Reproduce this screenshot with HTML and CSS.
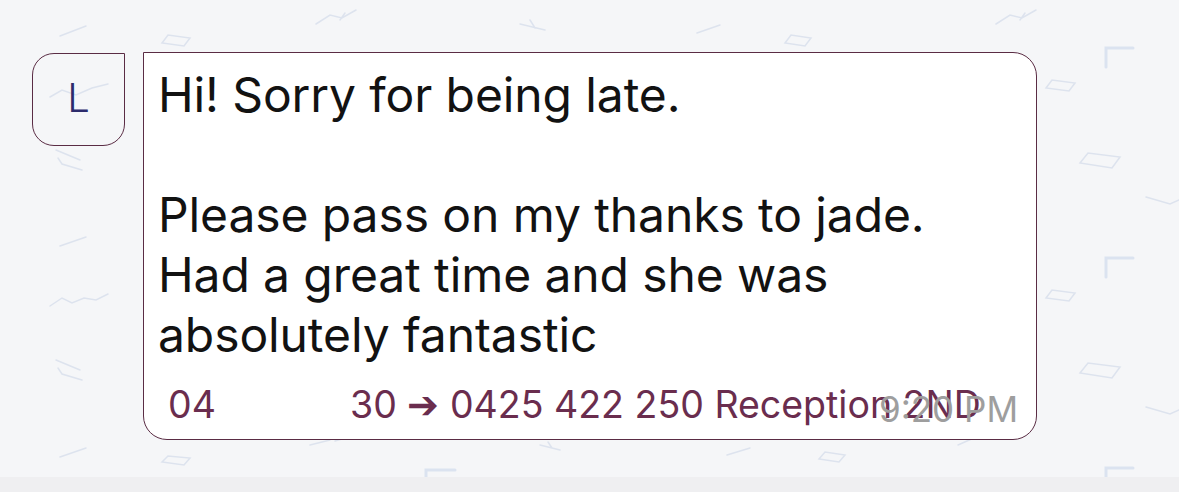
FILE: index.html
```html
<!DOCTYPE html>
<html>
<head>
<meta charset="utf-8">
<link rel="stylesheet" href="styles.css">
</head>
<body>
<div class="screen">
  <svg class="doodles" width="1179" height="477" viewBox="0 0 1179 477" fill="none" stroke="#dde3ee" stroke-width="1.5" stroke-linecap="round">
    <path d="M60 36 L86 26"/>
    <path d="M162 43 L168 35 L190 38 L184 46 Z"/>
    <path d="M316 24 L330 15 L342 18 L356 10 M340 20 L345 13"/>
    <path d="M520 24 L545 30 M530 20 L535 28"/>
    <path d="M697 33 L720 25"/>
    <path d="M785 43 L791 35 L811 38 L805 46 Z"/>
    <path d="M996 24 L1010 15 L1022 18 L1036 10 M1020 20 L1025 13"/>
    <path d="M1106 67 L1106 48 L1133 48" stroke="#dbe3f0" stroke-width="3"/>
    <path d="M1046 88 L1052 80 L1075 83 L1069 91 Z"/>
    <path d="M1080 163 L1088 153 L1120 157 L1112 168 Z"/>
    <path d="M1146 197 L1170 204 L1179 200"/>
    <path d="M1106 277 L1106 258 L1133 258" stroke="#dbe3f0" stroke-width="3"/>
    <path d="M1046 298 L1052 290 L1075 293 L1069 301 Z"/>
    <path d="M1080 373 L1088 363 L1120 367 L1112 378 Z"/>
    <path d="M1146 407 L1170 414 L1179 410"/>
    <path d="M1106 477 L1106 468 L1133 468" stroke="#dbe3f0" stroke-width="3"/>
    <path d="M50 97 L62 90 L76 95 L92 88 L108 84"/>
    <path d="M56 150 L80 160 M58 158 L62 164 L82 170"/>
    <path d="M60 246 L86 237"/>
    <path d="M50 306 L62 298 L72 303 L84 298 L96 300 L108 294"/>
    <path d="M56 360 L80 370 M58 368 L62 374 L82 380"/>
    <path d="M60 457 L86 448"/>
    <path d="M162 462 L168 456 L190 458 L184 465 Z"/>
    <path d="M310 445 L330 440 M335 441 L345 438"/>
    <path d="M426 477 L426 470 L455 470" stroke="#dbe3f0" stroke-width="3"/>
    <path d="M540 445 L560 450 M548 442 L552 448"/>
    <path d="M727 455 L750 448"/>
    <path d="M819 459 L825 452 L845 455 L839 462 Z"/>
    <path d="M958 445 L985 433"/>
  </svg>
  <div class="row">
    <div class="avatar">L</div>
    <div class="bubble">
      <p class="body">Hi! Sorry for being late.<br><br>Please pass on my thanks to jade.<br>Had a great time and she was<br>absolutely fantastic</p>
      <p class="footer"><span class="area">04</span><span>30 ➔ 0425 422 250 Reception 2ND</span></p>
      <span class="time">9:20 PM</span>
    </div>
  </div>
</div>
<div class="bottombar"></div>
</body>
</html>
```

FILE: styles.css
```css
html, body {
  margin: 0;
  padding: 0;
}
body {
  width: 1179px;
  height: 492px;
  overflow: hidden;
  background: #f5f6f8;
  font-family: Inter, "Liberation Sans", sans-serif;
}
.screen {
  position: relative;
  height: 477px;
}
.doodles {
  position: absolute;
  left: 0;
  top: 0;
}
.row {
  position: relative;
  display: flex;
  align-items: flex-start;
  gap: 18px;
  padding: 52px 0 0 32px;
}
.avatar {
  box-sizing: border-box;
  width: 93px;
  height: 93px;
  margin-top: 1px;
  padding-bottom: 4px;
  border: 1.5px solid #5a2c44;
  border-radius: 22px 0 22px 22px;
  display: flex;
  align-items: center;
  justify-content: center;
  color: #2c2b6c;
  font-size: 40px;
  font-weight: 350;
}
.bubble {
  position: relative;
  box-sizing: border-box;
  width: 894px;
  height: 388px;
  background: #fff;
  border: 1.5px solid #5a2c44;
  border-radius: 0 24px 24px 24px;
  padding: 12px 14px 0 14px;
}
.body {
  margin: 0;
  color: #121212;
  font-size: 48px;
  line-height: 60px;
  letter-spacing: -0.1px;
}
.footer {
  margin: 18px 0 0 10px;
  color: #6a2d4e;
  font-size: 37.5px;
  line-height: 44px;
  display: flex;
  white-space: nowrap;
}
.area {
  width: 182px;
}
.time {
  position: absolute;
  right: 18px;
  bottom: 8px;
  color: #9e9e9e;
  font-size: 35px;
  line-height: 44px;
}
.bottombar {
  height: 15px;
  background: #efeff1;
}
```
